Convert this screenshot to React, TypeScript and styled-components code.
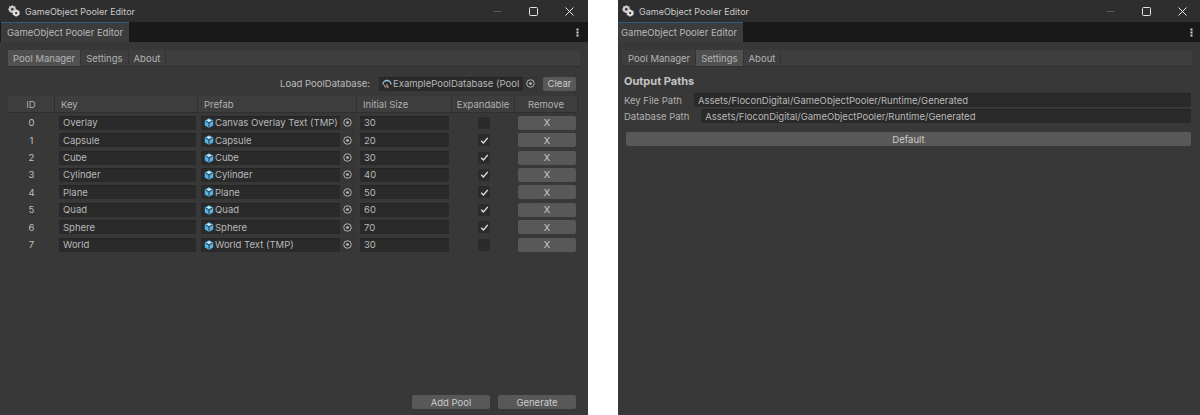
import React from "react";
import styled, { createGlobalStyle } from "styled-components";

const GlobalStyle = createGlobalStyle`
  html, body {
    margin: 0;
    padding: 0;
    background: #ffffff;
  }
  body {
    font-family: Inter, "Noto Sans", "Liberation Sans", sans-serif;
    font-size: 9.5px;
    color: #c0c0c0;
  }
  * {
    box-sizing: border-box;
  }
`;

const Page = styled.div`
  display: flex;
  gap: 30px;
  width: 1200px;
  height: 415px;
  overflow: hidden;
`;

const Window = styled.div<{ $width: number }>`
  display: flex;
  flex-direction: column;
  width: ${(props) => props.$width}px;
  height: 415px;
  background: #383838;
`;

/* the second window in the picture is cut 4px further left than the first */
const TitleBar = styled.div<{ $cropped?: boolean }>`
  display: flex;
  align-items: center;
  height: 22px;
  flex-shrink: 0;
  padding-left: ${(props) => (props.$cropped ? "4px" : "8px")};
  padding-right: ${(props) => (props.$cropped ? "0" : "1px")};
  background: #2e2e2e;
  font-size: 9px;
  color: #cacaca;
`;

const TitleText = styled.span`
  margin-left: 5px;
  flex: 1;
`;

const WindowControl = styled.div`
  display: flex;
  align-items: center;
  justify-content: center;
  width: 36px;
  height: 18px;
  color: #e4e4e4;
`;

const DockBar = styled.div`
  display: flex;
  align-items: stretch;
  justify-content: space-between;
  height: 20px;
  flex-shrink: 0;
  background: #191919;
`;

const DockTab = styled.div<{ $cropped?: boolean }>`
  display: flex;
  align-items: center;
  width: ${(props) => (props.$cropped ? "125px" : "128px")};
  padding-left: ${(props) => (props.$cropped ? "3px" : "6px")};
  margin-left: ${(props) => (props.$cropped ? "0" : "1px")};
  background: #3c3c3c;
  border-top: 1px solid #2c5d87;
  color: #b8b8b8;
  white-space: nowrap;
`;

const MenuDots = styled.div<{ $cropped?: boolean }>`
  display: flex;
  align-items: center;
  margin-right: ${(props) => (props.$cropped ? "7px" : "9px")};
  color: #d6d6d6;
`;

const Body = styled.div<{ $cropped?: boolean }>`
  display: flex;
  flex-direction: column;
  flex: 1;
  padding: 7px 8px 6px ${(props) => (props.$cropped ? "4px" : "8px")};
  min-height: 0;
`;

const TabStrip = styled.div<{ $cropped?: boolean }>`
  display: flex;
  align-items: stretch;
  height: 17px;
  margin-top: 1px;
  padding-left: ${(props) => (props.$cropped ? "1px" : "0")};
  flex-shrink: 0;
  background: #3e3e3e;
  border-bottom: 1px solid #303030;
`;

const TabButton = styled.div<{ $active?: boolean }>`
  display: flex;
  align-items: center;
  padding: 0 5px;
  background: ${(props) => (props.$active ? "#505050" : "#3e3e3e")};
  border-right: 1px solid #333333;
  color: #b4b4b4;
`;

const LoadRow = styled.div`
  display: flex;
  align-items: center;
  justify-content: flex-end;
  height: 15px;
  margin-top: 9px;
  margin-right: 4px;
  flex-shrink: 0;
`;

const LoadLabel = styled.span`
  margin-right: 9px;
  color: #bcbcbc;
`;

const ObjectField = styled.div<{ $width?: number }>`
  display: flex;
  align-items: center;
  height: 14px;
  width: ${(props) => (props.$width ? `${props.$width}px` : "auto")};
  padding-left: 3px;
  background: #2a2a2a;
  box-shadow: inset 0 1px 0 #242424;
  border-radius: 2px;
  color: #b8b8b8;
  overflow: hidden;
  white-space: nowrap;
`;

const ObjectName = styled.span`
  flex: 1;
  margin-left: 1px;
  overflow: hidden;
`;

const PickerButton = styled.span`
  display: flex;
  align-items: center;
  justify-content: center;
  flex-shrink: 0;
  width: 14px;
  height: 14px;
  background: #363636;
  color: #c0c0c0;
`;

const ClearButton = styled.div`
  display: flex;
  align-items: center;
  justify-content: center;
  width: 33px;
  height: 14px;
  margin-left: 6px;
  background: #585858;
  border-radius: 2px;
  color: #cccccc;
`;

const Table = styled.div`
  display: flex;
  flex-direction: column;
  margin-top: 5px;
  width: 570px;
`;

const HeaderRow = styled.div`
  display: grid;
  grid-template-columns: 47px 143px 159px 95px 63px 63px;
  height: 17px;
  background: #3d3d3d;
  border-bottom: 1px solid #2f2f2f;
  margin-bottom: 1px;
`;

const HeaderCell = styled.div<{ $center?: boolean }>`
  display: flex;
  align-items: center;
  justify-content: ${(props) => (props.$center ? "center" : "flex-start")};
  padding-left: ${(props) => (props.$center ? "0" : "6px")};
  border-right: 1px solid #2f2f2f;
  color: #b0b0b0;
`;

const Row = styled.div`
  display: grid;
  grid-template-columns: 47px 143px 159px 95px 63px 63px;
  align-items: center;
  height: 17.43px;
`;

const IdCell = styled.div`
  text-align: center;
  color: #c0c0c0;
`;

const TextField = styled.div`
  display: flex;
  align-items: center;
  height: 14px;
  margin: 0 2px 0 4px;
  padding-left: 4px;
  background: #2a2a2a;
  box-shadow: inset 0 1px 0 #242424;
  border-radius: 2px;
  color: #b8b8b8;
`;

const PrefabCell = styled.div`
  padding: 0 3px 0 3px;
`;

const SizeField = styled(TextField)`
  margin: 0 3px 0 3px;
`;

const CheckCell = styled.div`
  display: flex;
  justify-content: center;
  padding-left: 1px;
`;

const CheckBox = styled.div`
  display: flex;
  align-items: center;
  justify-content: center;
  width: 12px;
  height: 12px;
  background: #2b2b2b;
  border-radius: 2px;
  color: #e2e2e2;
`;

const RemoveButton = styled.div`
  display: flex;
  align-items: center;
  justify-content: center;
  height: 14px;
  margin: 0 2px 0 3px;
  background: #585858;
  border-radius: 2px;
  color: #cccccc;
`;

const Footer = styled.div`
  display: flex;
  justify-content: flex-end;
  gap: 8px;
  margin-top: auto;
  padding-right: 4px;
`;

const FooterButton = styled.div`
  display: flex;
  align-items: center;
  justify-content: center;
  width: 78px;
  height: 14px;
  background: #585858;
  border-radius: 2px;
  color: #cccccc;
`;

const SectionTitle = styled.div`
  margin-top: 7px;
  margin-left: 2px;
  font-size: 11px;
  font-weight: 700;
  color: #c4c4c4;
`;

const PathRows = styled.div`
  display: flex;
  flex-direction: column;
  gap: 2px;
  margin-top: 5px;
`;

const PathRow = styled.div`
  display: flex;
  align-items: center;
  height: 14px;
  margin-left: 2px;
  margin-right: 1px;
  color: #b0b0b0;
`;

const PathLabel = styled.span`
  margin-right: 12px;
`;

const PathValue = styled.div`
  display: flex;
  align-items: center;
  flex: 1;
  height: 14px;
  padding-left: 4px;
  background: #2a2a2a;
  box-shadow: inset 0 1px 0 #242424;
  border-radius: 2px;
  color: #b8b8b8;
`;

const DefaultButton = styled.div`
  display: flex;
  align-items: center;
  justify-content: center;
  height: 14px;
  margin: 9px 1px 0 4px;
  background: #585858;
  border-radius: 2px;
  color: #cccccc;
`;

const UnityIcon = () => (
  <svg width="12" height="12" viewBox="0 0 14 14">
    <circle cx="5" cy="5" r="4.2" fill="#c9c9c9" />
    <path d="M9.5 5L13.5 7.2V11.5L9.5 13.8L5.5 11.5V7.2Z" fill="#dcdcdc" />
    <circle cx="5" cy="5" r="1.4" fill="#2e2e2e" />
    <circle cx="9.5" cy="9.4" r="1.3" fill="#2e2e2e" />
    <path d="M5 0v2M0 5h2M1.5 1.5l1.2 1.2M8.5 1.5L7.3 2.7" stroke="#c9c9c9" strokeWidth="1" />
  </svg>
);

const PrefabIcon = () => (
  <svg width="10" height="10" viewBox="0 0 10 10">
    <path d="M5 0.3L9.2 2.6V7.4L5 9.7L0.8 7.4V2.6Z" fill="#56b2e4" />
    <path d="M1.6 3L5 5V8.9M8.4 3L5 5" stroke="#2a2a2a" strokeWidth="0.9" fill="none" />
    <path d="M2.6 2.4L5 1.2L7.4 2.4L5 3.7Z" fill="#d8eefa" />
  </svg>
);

const DatabaseIcon = () => (
  <svg width="10" height="11" viewBox="0 0 10 11">
    <path d="M1 6.5A4 4 0 1 1 9 6.5" stroke="#8fc4dc" strokeWidth="1.4" fill="none" />
    <path d="M5 5.5L7 9.5L5.4 10.4L3.6 7.4Z" fill="#b5705c" />
    <path d="M2 7l1.5 2.5" stroke="#7aa9c0" strokeWidth="1.2" />
  </svg>
);

const TargetIcon = () => (
  <svg width="9" height="9" viewBox="0 0 10 10">
    <circle cx="5" cy="5" r="4.2" stroke="currentColor" strokeWidth="1" fill="none" />
    <circle cx="5" cy="5" r="1.5" fill="currentColor" />
  </svg>
);

const CheckMark = () => (
  <svg width="9" height="9" viewBox="0 0 9 9">
    <path d="M1.2 4.8L3.4 7L7.8 1.8" stroke="currentColor" strokeWidth="1.3" fill="none" />
  </svg>
);

const WindowFrame: React.FC<{
  width: number;
  cropped?: boolean;
  children: React.ReactNode;
}> = ({ width, cropped, children }) => (
  <Window $width={width}>
    <TitleBar $cropped={cropped}>
      <UnityIcon />
      <TitleText>GameObject Pooler Editor</TitleText>
      <WindowControl>
        <svg width="9" height="9" viewBox="0 0 9 9">
          <path d="M0.5 4.5h8" stroke="#565656" strokeWidth="1" />
        </svg>
      </WindowControl>
      <WindowControl>
        <svg width="9" height="9" viewBox="0 0 9 9">
          <rect x="0.5" y="0.5" width="8" height="8" rx="1" stroke="currentColor" strokeWidth="1" fill="none" />
        </svg>
      </WindowControl>
      <WindowControl>
        <svg width="9" height="9" viewBox="0 0 9 9">
          <path d="M0.5 0.5l8 8M8.5 0.5l-8 8" stroke="currentColor" strokeWidth="1" />
        </svg>
      </WindowControl>
    </TitleBar>
    <DockBar>
      <DockTab $cropped={cropped}>GameObject Pooler Editor</DockTab>
      <MenuDots $cropped={cropped}>
        <svg width="3" height="9" viewBox="0 0 3 9">
          <rect x="0.5" y="0.5" width="2" height="2" fill="currentColor" />
          <rect x="0.5" y="3.5" width="2" height="2" fill="currentColor" />
          <rect x="0.5" y="6.5" width="2" height="2" fill="currentColor" />
        </svg>
      </MenuDots>
    </DockBar>
    {children}
  </Window>
);

const Tabs: React.FC<{ active: string; cropped?: boolean }> = ({ active, cropped }) => (
  <TabStrip $cropped={cropped}>
    {["Pool Manager", "Settings", "About"].map((name) => (
      <TabButton key={name} $active={name === active}>
        {name}
      </TabButton>
    ))}
  </TabStrip>
);

const pools = [
  { key: "Overlay", prefab: "Canvas Overlay Text (TMP)", size: 30, expandable: false },
  { key: "Capsule", prefab: "Capsule", size: 20, expandable: true },
  { key: "Cube", prefab: "Cube", size: 30, expandable: true },
  { key: "Cylinder", prefab: "Cylinder", size: 40, expandable: true },
  { key: "Plane", prefab: "Plane", size: 50, expandable: true },
  { key: "Quad", prefab: "Quad", size: 60, expandable: true },
  { key: "Sphere", prefab: "Sphere", size: 70, expandable: true },
  { key: "World", prefab: "World Text (TMP)", size: 30, expandable: false },
];

const App: React.FC = () => {
  return (
    <Page>
      <GlobalStyle />
      <WindowFrame width={588}>
        <Body>
          <Tabs active="Pool Manager" />
          <LoadRow>
            <LoadLabel>Load PoolDatabase:</LoadLabel>
            <ObjectField $width={158}>
              <DatabaseIcon />
              <ObjectName>ExamplePoolDatabase (Pool</ObjectName>
              <PickerButton>
                <TargetIcon />
              </PickerButton>
            </ObjectField>
            <ClearButton>Clear</ClearButton>
          </LoadRow>
          <Table>
            <HeaderRow>
              <HeaderCell $center>ID</HeaderCell>
              <HeaderCell>Key</HeaderCell>
              <HeaderCell>Prefab</HeaderCell>
              <HeaderCell>Initial Size</HeaderCell>
              <HeaderCell $center>Expandable</HeaderCell>
              <HeaderCell $center>Remove</HeaderCell>
            </HeaderRow>
            {pools.map((pool, i) => (
              <Row key={pool.key}>
                <IdCell>{i}</IdCell>
                <TextField>{pool.key}</TextField>
                <PrefabCell>
                  <ObjectField>
                    <PrefabIcon />
                    <ObjectName>{pool.prefab}</ObjectName>
                    <PickerButton>
                      <TargetIcon />
                    </PickerButton>
                  </ObjectField>
                </PrefabCell>
                <SizeField>{pool.size}</SizeField>
                <CheckCell>
                  <CheckBox>{pool.expandable && <CheckMark />}</CheckBox>
                </CheckCell>
                <RemoveButton>X</RemoveButton>
              </Row>
            ))}
          </Table>
          <Footer>
            <FooterButton>Add Pool</FooterButton>
            <FooterButton>Generate</FooterButton>
          </Footer>
        </Body>
      </WindowFrame>
      <WindowFrame width={582} cropped>
        <Body $cropped>
          <Tabs active="Settings" cropped />
          <SectionTitle>Output Paths</SectionTitle>
          <PathRows>
            <PathRow>
              <PathLabel>Key File Path</PathLabel>
              <PathValue>Assets/FloconDigital/GameObjectPooler/Runtime/Generated</PathValue>
            </PathRow>
            <PathRow>
              <PathLabel>Database Path</PathLabel>
              <PathValue>Assets/FloconDigital/GameObjectPooler/Runtime/Generated</PathValue>
            </PathRow>
          </PathRows>
          <DefaultButton>Default</DefaultButton>
        </Body>
      </WindowFrame>
    </Page>
  );
};

export default App;
